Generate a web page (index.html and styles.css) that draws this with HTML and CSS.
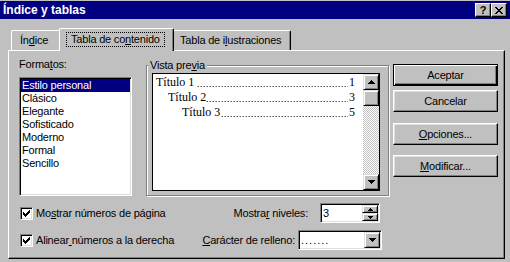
FILE: index.html
```html
<html>
    <head>
        <title>Índice y tablas</title>
        <link rel="stylesheet" href="styles.css">
    </head>
    <body>
        <div class="titlebar">
            <span class="title">Índice y tablas</span>
            <span class="tbtn help">?</span>
            <span class="tbtn close">
                <svg width="8" height="7" viewBox="0 0 8 7" shape-rendering="crispEdges">
                    <path d="M0 0h2v1h-2z M6 0h2v1h-2z M1 1h2v1h-2z M5 1h2v1h-2z M2 2h4v1h-4z M3 3h2v1h-2z M2 4h4v1h-4z M1 5h2v1h-2z M5 5h2v1h-2z M0 6h2v1h-2z M6 6h2v1h-2z" fill="#000"/>
                </svg>
            </span>
        </div>

        <div class="tabs">
            <div class="tab tab-index">Ín<u>d</u>ice</div>
            <div class="tab tab-active"><span class="focus">Tabla de co<u>n</u>tenido</span></div>
            <div class="tab tab-figures">Tabla de i<u>l</u>ustraciones</div>
        </div>

        <div class="panel">
            <div class="top">
                <div class="formats">
                    <div class="label">Forma<u>t</u>os:</div>
                    <div class="listbox">
                        <div class="item selected">Estilo personal</div>
                        <div class="item">Clásico</div>
                        <div class="item">Elegante</div>
                        <div class="item">Sofisticado</div>
                        <div class="item">Moderno</div>
                        <div class="item">Formal</div>
                        <div class="item">Sencillo</div>
                    </div>
                </div>

                <div class="group">
                    <div class="legend">Vista pre<u>v</u>ia</div>
                    <div class="preview">
                        <div class="toc">
                            <div class="toc-row"><span>Título 1&nbsp;</span><span class="toc-dots"></span><span>1</span></div>
                            <div class="toc-row level-2"><span>Título 2</span><span class="toc-dots"></span><span>3</span></div>
                            <div class="toc-row level-3"><span>Título 3</span><span class="toc-dots"></span><span>5</span></div>
                        </div>
                        <div class="scrollbar">
                            <div class="sbtn">
                                <svg width="7" height="4" viewBox="0 0 7 4" shape-rendering="crispEdges"><path d="M3 0h1v1h-1z M2 1h3v1h-3z M1 2h5v1h-5z M0 3h7v1h-7z" fill="#000"/></svg>
                            </div>
                            <div class="sbtn thumb"></div>
                            <div class="track"></div>
                            <div class="sbtn">
                                <svg width="7" height="4" viewBox="0 0 7 4" shape-rendering="crispEdges"><path d="M0 0h7v1h-7z M1 1h5v1h-5z M2 2h3v1h-3z M3 3h1v1h-1z" fill="#000"/></svg>
                            </div>
                        </div>
                    </div>
                </div>

                <div class="actions">
                    <div class="btn btn-default">Aceptar</div>
                    <div class="btn btn-cancel">Cancelar</div>
                    <div class="btn btn-options"><u>O</u>pciones...</div>
                    <div class="btn btn-modify"><u>M</u>odificar...</div>
                </div>
            </div>

            <div class="options">
                <div class="opt-row">
                    <div class="check">
                        <span class="checkbox">
                            <svg width="7" height="7" viewBox="0 0 7 7" shape-rendering="crispEdges"><path d="M6 0h1v1h-1z M5 1h2v1h-2z M0 2h1v1h-1z M4 2h3v1h-3z M0 3h2v1h-2z M3 3h3v1h-3z M0 4h5v1h-5z M1 5h3v1h-3z M2 6h1v1h-1z" fill="#000"/></svg>
                        </span>
                        <span>Mo<u>s</u>trar números de página</span>
                    </div>
                    <div class="field levels">
                        <span class="field-label">Mostra<u>r</u> niveles:</span>
                        <div class="spin">
                            <span class="spin-value">3</span>
                            <div class="spin-buttons">
                                <div class="sbtn small">
                                    <svg width="5" height="3" viewBox="0 0 5 3" shape-rendering="crispEdges"><path d="M2 0h1v1h-1z M1 1h3v1h-3z M0 2h5v1h-5z" fill="#000"/></svg>
                                </div>
                                <div class="sbtn small">
                                    <svg width="5" height="3" viewBox="0 0 5 3" shape-rendering="crispEdges"><path d="M0 0h5v1h-5z M1 1h3v1h-3z M2 2h1v1h-1z" fill="#000"/></svg>
                                </div>
                            </div>
                        </div>
                    </div>
                </div>

                <div class="opt-row">
                    <div class="check">
                        <span class="checkbox">
                            <svg width="7" height="7" viewBox="0 0 7 7" shape-rendering="crispEdges"><path d="M6 0h1v1h-1z M5 1h2v1h-2z M0 2h1v1h-1z M4 2h3v1h-3z M0 3h2v1h-2z M3 3h3v1h-3z M0 4h5v1h-5z M1 5h3v1h-3z M2 6h1v1h-1z" fill="#000"/></svg>
                        </span>
                        <span>Alinear<u> </u>números a la derecha</span>
                    </div>
                    <div class="field fill">
                        <span class="field-label"><u>C</u>arácter de relleno:</span>
                        <div class="combo">
                            <span class="combo-value">.......</span>
                            <div class="sbtn">
                                <svg width="7" height="4" viewBox="0 0 7 4" shape-rendering="crispEdges"><path d="M0 0h7v1h-7z M1 1h5v1h-5z M2 2h3v1h-3z M3 3h1v1h-1z" fill="#000"/></svg>
                            </div>
                        </div>
                    </div>
                </div>
            </div>
        </div>
    </body>
</html>
```

FILE: styles.css
```css
body {
    margin: 0;
    width: 510px;
    height: 262px;
    overflow: hidden;
    background-color: #c0c0c0;
    font-family: "Liberation Sans", Arial, sans-serif;
    font-size: 11px;
    letter-spacing: -0.2px;
    line-height: 13px;
    color: #000;
}

/* Title bar */
.titlebar {
    display: flex;
    align-items: center;
    height: 18px;
    margin-top: 1px;
    padding: 0 3px;
    background-color: #000080;
    color: #fff;
}

.title {
    flex: 1;
    font-size: 12px;
    font-weight: bold;
    letter-spacing: 0;
}

.tbtn {
    display: flex;
    align-items: center;
    justify-content: center;
    box-sizing: border-box;
    width: 16px;
    height: 14px;
    background-color: #c0c0c0;
    color: #000;
    border: 1px solid;
    border-color: #fff #000 #000 #fff;
    box-shadow: inset -1px -1px #808080;
}

.help {
    font-weight: bold;
    font-size: 11px;
    letter-spacing: 0;
}

/* Tabs */
.tabs {
    display: flex;
    align-items: flex-end;
    margin: 9px 0 0 11px;
}

.tab {
    box-sizing: border-box;
    height: 20px;
    padding: 3px 0 0 8px;
    background-color: #c0c0c0;
    border-top: 1px solid #fff;
    border-left: 1px solid #fff;
    border-right: 1px solid #000;
    border-radius: 2px 2px 0 0;
    box-shadow: inset -1px 0 #808080;
    white-space: nowrap;
}

.tab-index {
    width: 50px;
}

.tab-active {
    position: relative;
    z-index: 1;
    width: 115px;
    height: 23px;
    margin: 0 -2px -1px;
    padding: 4px 0 0 7px;
}

.tab-figures {
    width: 119px;
    padding-left: 7px;
}

.focus {
    display: inline-block;
    vertical-align: top;
    padding: 0 4px;
    outline: 1px dotted #000;
}

/* Panel */
.panel {
    box-sizing: border-box;
    width: 497px;
    height: 209px;
    margin-left: 8px;
    padding: 7px 0 0 10px;
    border: 1px solid;
    border-color: #fff #000 #000 #fff;
    box-shadow: inset -1px -1px #808080;
}

.top {
    display: flex;
    align-items: flex-start;
}

.formats {
    width: 113px;
}

.listbox {
    box-sizing: border-box;
    height: 119px;
    margin-top: 6px;
    padding: 1px;
    background-color: #fff;
    border: 1px solid;
    border-color: #808080 #fff #fff #808080;
    box-shadow: inset 1px 1px #000, inset -1px -1px #dfdfdf;
}

.item {
    padding-left: 1px;
    white-space: nowrap;
}

.item.selected {
    background-color: #000080;
    color: #fff;
}

/* Preview group */
.group {
    box-sizing: border-box;
    width: 243px;
    height: 131px;
    margin: 7px 0 0 14px;
    padding: 0 8px 0 5px;
    border: 1px solid #808080;
    box-shadow: inset 1px 1px #fff, 1px 1px #fff;
}

.legend {
    width: fit-content;
    margin: -7px 0 0 -4px;
    padding: 0 2px;
    background-color: #c0c0c0;
}

.preview {
    display: flex;
    box-sizing: border-box;
    height: 118px;
    margin-top: 1px;
    background-color: #fff;
    border: 1px solid #000;
}

.toc {
    flex: 1;
    min-width: 0;
    padding: 1px 8px 0 3px;
    font-family: "Liberation Serif", "Times New Roman", serif;
    font-size: 12px;
    line-height: 15px;
    letter-spacing: 0;
}

.toc-row {
    display: flex;
    white-space: nowrap;
}

.toc-row.level-2 {
    padding-left: 12px;
}

.toc-row.level-3 {
    padding-left: 26px;
}

/* dot leader drawn as a background, one dot every 3px on the baseline */
.toc-dots {
    flex: 1;
    margin-right: 1px;
    background: linear-gradient(90deg, #000 1px, transparent 1px) right 0 top 11px / 3px 1px repeat-x;
}

.scrollbar {
    display: flex;
    flex-direction: column;
    width: 16px;
}

.sbtn {
    display: flex;
    align-items: center;
    justify-content: center;
    box-sizing: border-box;
    width: 16px;
    height: 16px;
    background-color: #c0c0c0;
    border: 1px solid;
    border-color: #dfdfdf #000 #000 #dfdfdf;
    box-shadow: inset 1px 1px #fff, inset -1px -1px #808080;
}

.sbtn.small {
    height: 8px;
}

.track {
    flex: 1;
    background: repeating-conic-gradient(#c0c0c0 0 25%, #fff 0 50%) 0 0 / 2px 2px;
}

/* Buttons */
.actions {
    display: flex;
    flex-direction: column;
    width: 105px;
    margin: 6px 0 0 4px;
}

.btn {
    box-sizing: border-box;
    height: 22px;
    line-height: 20px;
    text-align: center;
    border: 1px solid;
    border-color: #fff #000 #000 #fff;
    box-shadow: inset -1px -1px #808080, inset 1px 1px #dfdfdf;
}

.btn-default {
    border-color: #000;
    box-shadow: inset 1px 1px #fff, inset -1px -1px #000, inset -2px -2px #808080;
}

.btn-cancel {
    margin-top: 4px;
}

.btn-options {
    margin-top: 11px;
}

.btn-modify {
    margin-top: 10px;
}

/* Bottom options */
.options {
    margin-top: 7px;
    padding-right: 122px;
}

.opt-row {
    display: flex;
    align-items: center;
    height: 20px;
}

.opt-row + .opt-row {
    margin-top: 7px;
}

.check {
    display: flex;
    align-items: center;
    gap: 3px;
    margin-left: 1px;
    white-space: nowrap;
}

.checkbox {
    display: flex;
    align-items: center;
    justify-content: center;
    box-sizing: border-box;
    width: 13px;
    height: 13px;
    background-color: #fff;
    border: 1px solid;
    border-color: #808080 #fff #fff #808080;
    box-shadow: inset 1px 1px #000, inset -1px -1px #dfdfdf;
}

.field {
    display: flex;
    align-items: center;
    margin-left: auto;
    white-space: nowrap;
}

.levels .field-label {
    margin-right: 12px;
}

.fill .field-label {
    margin-right: 3px;
}

.spin,
.combo {
    display: flex;
    box-sizing: border-box;
    height: 20px;
    padding: 1px;
    background-color: #fff;
    border: 1px solid;
    border-color: #808080 #fff #fff #808080;
    box-shadow: inset 1px 1px #000, inset -1px -1px #dfdfdf;
}

.spin {
    width: 60px;
    margin-right: 2px;
}

.combo {
    width: 84px;
}

.spin-value,
.combo-value {
    flex: 1;
    padding-left: 1px;
    line-height: 16px;
}

.combo-value {
    letter-spacing: 1px;
}

.spin-buttons {
    display: flex;
    flex-direction: column;
}
```
